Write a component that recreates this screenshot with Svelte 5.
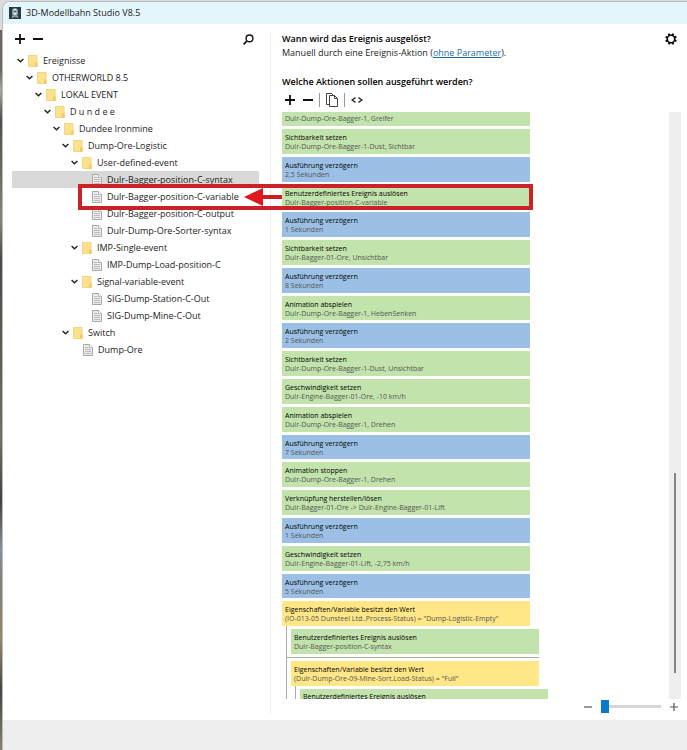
<script lang="ts">
  type Action = { kind: 'event' | 'wait' | 'condition'; title: string; detail: string };

  // Event tree, flattened with its nesting depth
  const tree = [
    { depth: 0, folder: true, label: 'Ereignisse' },
    { depth: 1, folder: true, label: 'OTHERWORLD 8.5' },
    { depth: 2, folder: true, label: 'LOKAL EVENT' },
    { depth: 3, folder: true, label: 'D u n d e e' },
    { depth: 4, folder: true, label: 'Dundee Ironmine' },
    { depth: 5, folder: true, label: 'Dump-Ore-Logistic' },
    { depth: 6, folder: true, label: 'User-defined-event' },
    { depth: 7, folder: false, label: 'Dulr-Bagger-position-C-syntax' },
    { depth: 7, folder: false, label: 'Dulr-Bagger-position-C-variable' },
    { depth: 7, folder: false, label: 'Dulr-Bagger-position-C-output' },
    { depth: 7, folder: false, label: 'Dulr-Dump-Ore-Sorter-syntax' },
    { depth: 6, folder: true, label: 'IMP-Single-event' },
    { depth: 7, folder: false, label: 'IMP-Dump-Load-position-C' },
    { depth: 6, folder: true, label: 'Signal-variable-event' },
    { depth: 7, folder: false, label: 'SIG-Dump-Station-C-Out' },
    { depth: 7, folder: false, label: 'SIG-Dump-Mine-C-Out' },
    { depth: 5, folder: true, label: 'Switch' },
    { depth: 6, folder: false, label: 'Dump-Ore' }
  ];

  const event = (title: string, detail: string): Action => ({ kind: 'event', title, detail });
  const wait = (seconds: string): Action => ({
    kind: 'wait',
    title: 'Ausführung verzögern',
    detail: `${seconds} Sekunden`
  });
  const condition = (detail: string): Action => ({
    kind: 'condition',
    title: 'Eigenschaften/Variable besitzt den Wert',
    detail
  });

  const actions = [
    event('Sichtbarkeit setzen', 'Dulr-Dump-Ore-Bagger-1-Dust, Sichtbar'),
    wait('2,5'),
    event('Benutzerdefiniertes Ereignis auslösen', 'Dulr-Bagger-position-C-variable'),
    wait('1'),
    event('Sichtbarkeit setzen', 'Dulr-Bagger-01-Ore, Unsichtbar'),
    wait('8'),
    event('Animation abspielen', 'Dulr-Dump-Ore-Bagger-1, HebenSenken'),
    wait('2'),
    event('Sichtbarkeit setzen', 'Dulr-Dump-Ore-Bagger-1-Dust, Unsichtbar'),
    event('Geschwindigkeit setzen', 'Dulr-Engine-Bagger-01-Ore, -10 km/h'),
    event('Animation abspielen', 'Dulr-Dump-Ore-Bagger-1, Drehen'),
    wait('7'),
    event('Animation stoppen', 'Dulr-Dump-Ore-Bagger-1, Drehen'),
    event('Verknüpfung herstellen/lösen', 'Dulr-Bagger-01-Ore -> Dulr-Engine-Bagger-01-Lift'),
    wait('1'),
    event('Geschwindigkeit setzen', 'Dulr-Engine-Bagger-01-Lift, -2,75 km/h'),
    wait('5'),
    condition('(IO-013-05 Dunsteel Ltd..Process-Status) = "Dump-Logistic-Empty"')
  ];

  let selected = $state(7);
  let zoom = $state(0);
</script>

{#snippet card(action: Action)}
  <div class="card {action.kind}">
    <strong>{action.title}</strong>
    <span>{action.detail}</span>
  </div>
{/snippet}

{#snippet plus()}
  <svg class="icon" viewBox="0 0 10 10"><path d="M5 0v10M0 5h10" stroke="currentColor" stroke-width="1.8" /></svg>
{/snippet}

{#snippet minus()}
  <svg class="icon" viewBox="0 0 10 10"><path d="M0 5h10" stroke="currentColor" stroke-width="1.8" /></svg>
{/snippet}

<div class="desktop">
  <div class="window">
    <header class="titlebar">
      <svg class="logo" viewBox="0 0 12 12">
        <rect width="12" height="12" fill="#263947" />
        <path d="M4.5 1.5h3v1h1v6h-5v-6h1z" fill="#e6eef1" />
        <path d="M4.4 3.4h3.2v2H4.4z" fill="#4c606d" />
        <circle cx="4.7" cy="7" r=".6" fill="#263947" />
        <circle cx="7.3" cy="7" r=".6" fill="#263947" />
        <path d="M4 9 3 10.7M8 9l1 1.7M3.6 9.8h4.8" stroke="#e6eef1" stroke-width=".7" />
      </svg>
      <h1>3D-Modellbahn Studio V8.5</h1>
    </header>

    <main>
      <aside>
        <div class="toolbar">
          <button aria-label="Hinzufügen">{@render plus()}</button>
          <button aria-label="Entfernen">{@render minus()}</button>
          <button class="search" aria-label="Suchen">
            <svg viewBox="0 0 11 11" fill="none" stroke="#111" stroke-width="1.4">
              <circle cx="6.5" cy="4.4" r="3.4" />
              <path d="M4 6.9.6 10.3" stroke-width="1.7" />
            </svg>
          </button>
        </div>

        <ul class="tree" role="tree" aria-label="Ereignisse">
          {#each tree as node, i}
            <li role="treeitem" aria-selected={selected === i} aria-level={node.depth + 1}>
              <button
                class="node"
                class:selected={selected === i}
                style="padding-left: {5 + node.depth * 9 + (node.folder ? 0 : 12)}px"
                onclick={() => (selected = i)}
              >
                {#if node.folder}
                  <svg class="chevron" viewBox="0 0 7 5"><path d="M.6.9 3.5 3.8 6.4.9" fill="none" stroke="#222" stroke-width="1.4" /></svg>
                  <svg class="glyph" viewBox="0 0 10 12">
                    <path d="M.5.5h8.500v11h-8.500z" fill="#fce28d" stroke="#f0d682" />
                    <path d="M7 7.500h2.700v4.200H7z" fill="#f5cc5c" />
                  </svg>
                {:else}
                  <svg class="glyph" viewBox="0 0 10 12">
                    <path d="M.5.5h6l3 3v8h-9z" fill="#ececec" stroke="#a8a8a8" />
                    <path d="M6.5.5v3h3" fill="#fff" stroke="#a8a8a8" stroke-width=".8" />
                    <path d="M2 3.5h3.500M2 5.5h6M2 7.5h6M2 9.5h6" stroke="#b4b4b4" stroke-width=".9" />
                  </svg>
                {/if}
                <span>{node.label}</span>
              </button>
            </li>
          {/each}
        </ul>
      </aside>

      <section>
        <div class="intro">
          <div>
            <h2>Wann wird das Ereignis ausgelöst?</h2>
            <p>Manuell durch eine Ereignis-Aktion (<a href="#parameter">ohne Parameter</a>).</p>
          </div>
          <button class="settings" aria-label="Einstellungen">
            <svg viewBox="-6 -6 12 12">
              <circle r="3.7" fill="none" stroke="#111" stroke-width="1.6" />
              {#each [0, 45, 90, 135, 180, 225, 270, 315] as angle}
                <path d="M-1.2-3.9-1-5.8H1L1.2-3.9z" fill="#111" transform="rotate({angle + 22})" />
              {/each}
            </svg>
          </button>
        </div>

        <h2>Welche Aktionen sollen ausgeführt werden?</h2>
        <div class="toolbar actions-bar">
          <button aria-label="Aktion hinzufügen">{@render plus()}</button>
          <button aria-label="Aktion entfernen">{@render minus()}</button>
          <i></i>
          <button aria-label="Kopieren">
            <svg class="copy" viewBox="0 0 12 14" fill="#fff" stroke="#444">
              <path d="M.5.5h5l2 2v9h-7z" />
              <path d="M3.5 2.5h5l3 3v8h-8z" />
              <path d="M8.5 2.5v3h3" fill="none" />
            </svg>
          </button>
          <i></i>
          <button aria-label="Quelltext">
            <svg class="code" viewBox="0 0 12 6" fill="none" stroke="#222" stroke-width="1.3"><path d="M4.5.6 1 3l3.5 2.4M7.5.6 11 3 7.5 5.4" /></svg>
          </button>
        </div>

        <div class="viewport">
          <div class="script">
            <div class="sequence">
              <div class="card event partial"><span>Dulr-Dump-Ore-Bagger-1, Greifer</span></div>
              {#each actions as action}
                {@render card(action)}
              {/each}
            </div>
            <div class="branch">
              {@render card(event('Benutzerdefiniertes Ereignis auslösen', 'Dulr-Bagger-position-C-syntax'))}
              <hr />
              {@render card(condition('(Dulr-Dump-Ore-09-Mine-Sort.Load-Status) = "Full"'))}
              <div class="branch inner">
                <div class="card event partial"><strong>Benutzerdefiniertes Ereignis auslösen</strong></div>
              </div>
            </div>
          </div>
          <div class="scrollbar"><div class="thumb"></div></div>
        </div>

        <div class="zoombar">
          <button aria-label="Verkleinern"><svg viewBox="0 0 8 8"><path d="M0 4h8" stroke="#555" stroke-width="1.2" /></svg></button>
          <input type="range" min="0" max="100" bind:value={zoom} aria-label="Zoom" />
          <button aria-label="Vergrößern"><svg viewBox="0 0 8 8"><path d="M0 4h8M4 0v8" stroke="#555" stroke-width="1.2" /></svg></button>
        </div>
      </section>
    </main>
    <footer></footer>
  </div>

  <!-- Red marker from the action to its tree entry -->
  <div class="marker">
    <svg viewBox="0 0 38 18">
      <path d="M18 9h20" stroke="#d01c20" stroke-width="4" />
      <path d="M0 9 19 0v18z" fill="#e0181c" />
    </svg>
  </div>
</div>

<style>
  :global(body) {
    margin: 0;
  }

  .desktop {
    position: relative;
    box-sizing: border-box;
    height: 100vh;
    padding: 1px 0 0 2px;
    overflow: hidden;
    background: linear-gradient(#dcdcdc 0 30px, #6f655c 30px 70px, #aaa59b 90px, #554d45 120px, #8b8470 220px, #4e4a42 260px, #77705f 440px, #45403a 500px, #87919c 550px, #858070 580px, #97856a 640px, #4a463e 690px, #8a816b);
    font-family: "Open Sans", "Noto Sans", sans-serif;
    font-size: 9px;
    line-height: 14px;
    color: #1c1c1c;
  }

  .window {
    display: flex;
    flex-direction: column;
    box-sizing: border-box;
    height: 100%;
    border: 1px solid #b4bcc0;
    border-width: 1px 0 0 1px;
    border-radius: 8px 0 0 0;
    overflow: hidden;
    background: #fff;
  }

  .titlebar {
    display: flex;
    align-items: center;
    gap: 5px;
    height: 22px;
    padding-left: 6px;
    background: #e3f6f9;
  }

  .logo {
    width: 12px;
    height: 12px;
  }

  h1,
  h2,
  p {
    margin: 0;
    font-size: 9px;
    line-height: 14px;
  }

  h1 {
    font-weight: 400;
  }

  h2 {
    font-weight: 600;
    color: #000;
  }

  button {
    display: flex;
    align-items: center;
    padding: 0;
    border: none;
    background: none;
    color: #111;
    font: inherit;
    cursor: pointer;
  }

  svg {
    display: block;
    flex: none;
  }

  main {
    display: flex;
    flex: 1;
    min-height: 0;
  }

  aside {
    width: 247px;
    padding: 7px 11px 0 9px;
  }

  .toolbar {
    display: flex;
    align-items: center;
    gap: 8px;
    height: 16px;
    padding-left: 3px;
  }

  .icon {
    width: 10px;
    height: 10px;
  }

  .search {
    margin-left: auto;
    margin-right: 5px;
  }

  .search svg {
    width: 11px;
    height: 11px;
  }

  .tree {
    margin: 5px 0 0;
    padding: 0;
    list-style: none;
  }

  .node {
    gap: 4px;
    box-sizing: border-box;
    width: 100%;
    height: 17px;
    white-space: nowrap;
    color: #1c1c1c;
  }

  .node.selected {
    background: #d9d9d9;
  }

  .node span {
    padding-left: 1px;
  }

  .chevron {
    width: 7px;
    height: 5px;
  }

  .glyph {
    width: 10px;
    height: 12px;
  }

  section {
    display: flex;
    flex: 1;
    flex-direction: column;
    min-width: 0;
    margin: 7px 0 6px;
    padding-left: 11px;
    border-left: 1px solid #ececec;
  }

  .intro {
    display: flex;
    justify-content: space-between;
    align-items: flex-start;
    margin: 1px 0 15px;
  }

  a {
    color: #1d6f9c;
  }

  .settings {
    margin-right: 10px;
  }

  .settings svg {
    width: 12px;
    height: 14px;
  }

  .actions-bar {
    height: 22px;
  }

  .actions-bar i {
    width: 1px;
    height: 14px;
    margin: 0 -2px;
    background: #999;
  }

  .copy {
    width: 12px;
    height: 14px;
  }

  .code {
    width: 12px;
    height: 6px;
  }

  .viewport {
    display: flex;
    flex: 1;
    min-height: 0;
    margin-top: 1px;
    padding-right: 6px;
  }

  .script {
    display: flex;
    flex: 1;
    flex-direction: column;
    min-width: 0;
    overflow: hidden;
  }

  .sequence {
    display: flex;
    flex: 1;
    flex-direction: column;
    gap: 3px;
    min-height: 0;
  }

  .sequence .card {
    flex: 1;
  }

  .card {
    box-sizing: border-box;
    width: 248px;
    height: 25px;
    padding: 4px 3px 0;
    font-size: 7px;
    line-height: 9px;
    white-space: nowrap;
  }

  .sequence .partial {
    flex: none;
    height: 14px;
    padding-top: 2px;
  }

  .inner .partial {
    height: 10px;
    padding-top: 3px;
    overflow: hidden;
  }

  .card strong,
  .card span {
    display: block;
    font-weight: 400;
    color: #000;
  }

  .card span {
    color: #555;
  }

  .event {
    background: #c3e3ad;
  }

  .wait {
    background: #9cc0e5;
  }

  .condition {
    background: #ffe787;
  }

  .branch {
    display: flex;
    flex-direction: column;
    gap: 3px;
    width: 248px;
    margin-left: 4px;
    padding: 3px 0 0 4px;
    border-left: 1px solid #aaa;
  }

  .branch hr {
    width: 252px;
    height: 1px;
    margin: 0 0 0 -4px;
    border: none;
    background: #aaa;
  }

  .branch.inner {
    margin-top: -3px;
  }

  .scrollbar {
    display: flex;
    flex-direction: column;
    justify-content: flex-end;
    align-items: center;
    width: 12px;
    background: #eee;
  }

  .thumb {
    width: 2px;
    height: 34%;
    margin-bottom: 26px;
    background: #858585;
  }

  .zoombar {
    display: flex;
    justify-content: flex-end;
    align-items: center;
    gap: 9px;
    height: 15px;
    padding-right: 9px;
  }

  .zoombar svg {
    width: 8px;
    height: 8px;
  }

  input[type="range"] {
    appearance: none;
    width: 60px;
    height: 14px;
    margin: 0;
    background: linear-gradient(#d6d6d6, #d6d6d6) center / 100% 3px no-repeat;
  }

  input[type="range"]::-webkit-slider-thumb {
    appearance: none;
    width: 8px;
    height: 13px;
    background: #0a78cc;
  }

  footer {
    height: 30px;
    background: #eee;
  }

  .marker {
    position: absolute;
    top: 184px;
    left: 78px;
    box-sizing: border-box;
    width: 455px;
    height: 26px;
    border: 4px solid #cb2228;
    pointer-events: none;
  }

  .marker svg {
    position: absolute;
    top: 0;
    left: 162px;
    width: 38px;
    height: 18px;
  }
</style>
